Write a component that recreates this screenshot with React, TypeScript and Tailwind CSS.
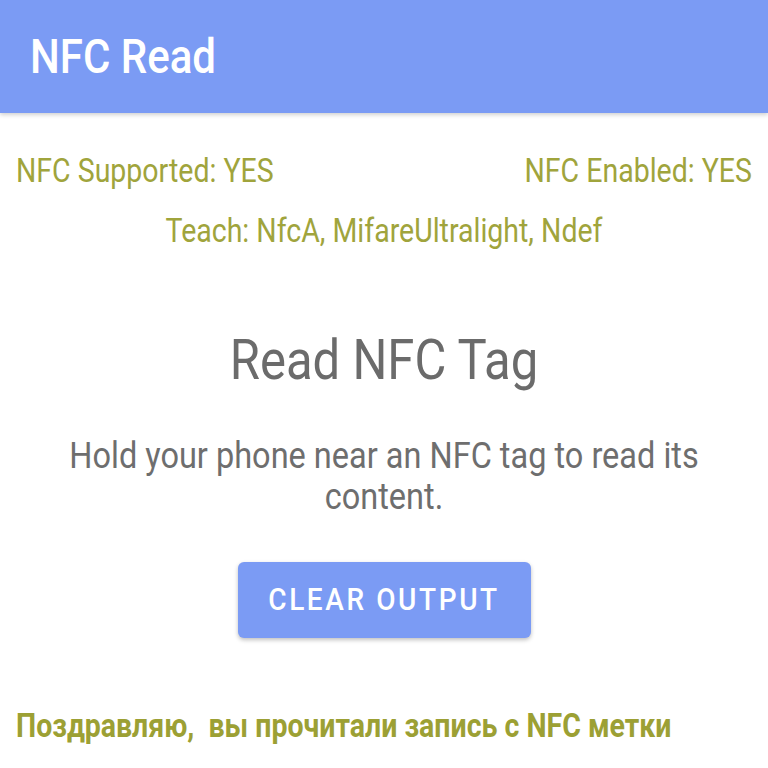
import React from "react";

const tall = "inline-block scale-y-[1.15]";

export default function App() {
  return (
    <div className="w-[768px] h-[768px] bg-white overflow-hidden font-['Roboto',sans-serif] flex flex-col">
      <header className="h-[113px] bg-[#7b9bf4] shadow-[0_2px_4px_rgba(0,0,0,0.18)] flex items-center px-[30px] shrink-0">
        <h1 className={`${tall} text-white text-[42px] font-medium leading-none`}>NFC Read</h1>
      </header>

      <div className="flex justify-between px-4 pt-[45px] text-[#a0a43c] text-[28.5px] leading-none">
        <span className={tall}>NFC Supported: YES</span>
        <span className={tall}>NFC Enabled: YES</span>
      </div>

      <p className="mt-[31px] text-center text-[#a0a43c] text-[28.5px] leading-none">
        <span className={tall}>Teach: NfcA, MifareUltralight, Ndef</span>
      </p>

      <h2 className="mt-[90px] text-center text-[#6b6b6b] text-[49px] leading-none">
        <span className={tall}>Read NFC Tag</span>
      </h2>

      <p className="mt-[50px] mx-auto w-[700px] text-center text-[#6e6e6e] text-[32.5px] leading-[41px]">
        <span className={tall}>Hold your phone near an NFC tag to read its</span>
        <br />
        <span className={tall}>content.</span>
      </p>

      <div className="mt-[45px] flex justify-center">
        <button className="w-[293px] h-[76px] rounded-md bg-[#7b9bf4] text-white text-[28px] font-medium tracking-[2.6px] shadow-[0_2px_4px_rgba(0,0,0,0.25)]">
          <span className={tall}>CLEAR OUTPUT</span>
        </button>
      </div>

      <p className="mt-[75px] px-4 text-[#9ca034] text-[28.5px] font-bold leading-none whitespace-pre">
        <span className={tall}>Поздравляю,  вы прочитали запись с NFC метки</span>
      </p>
    </div>
  );
}
